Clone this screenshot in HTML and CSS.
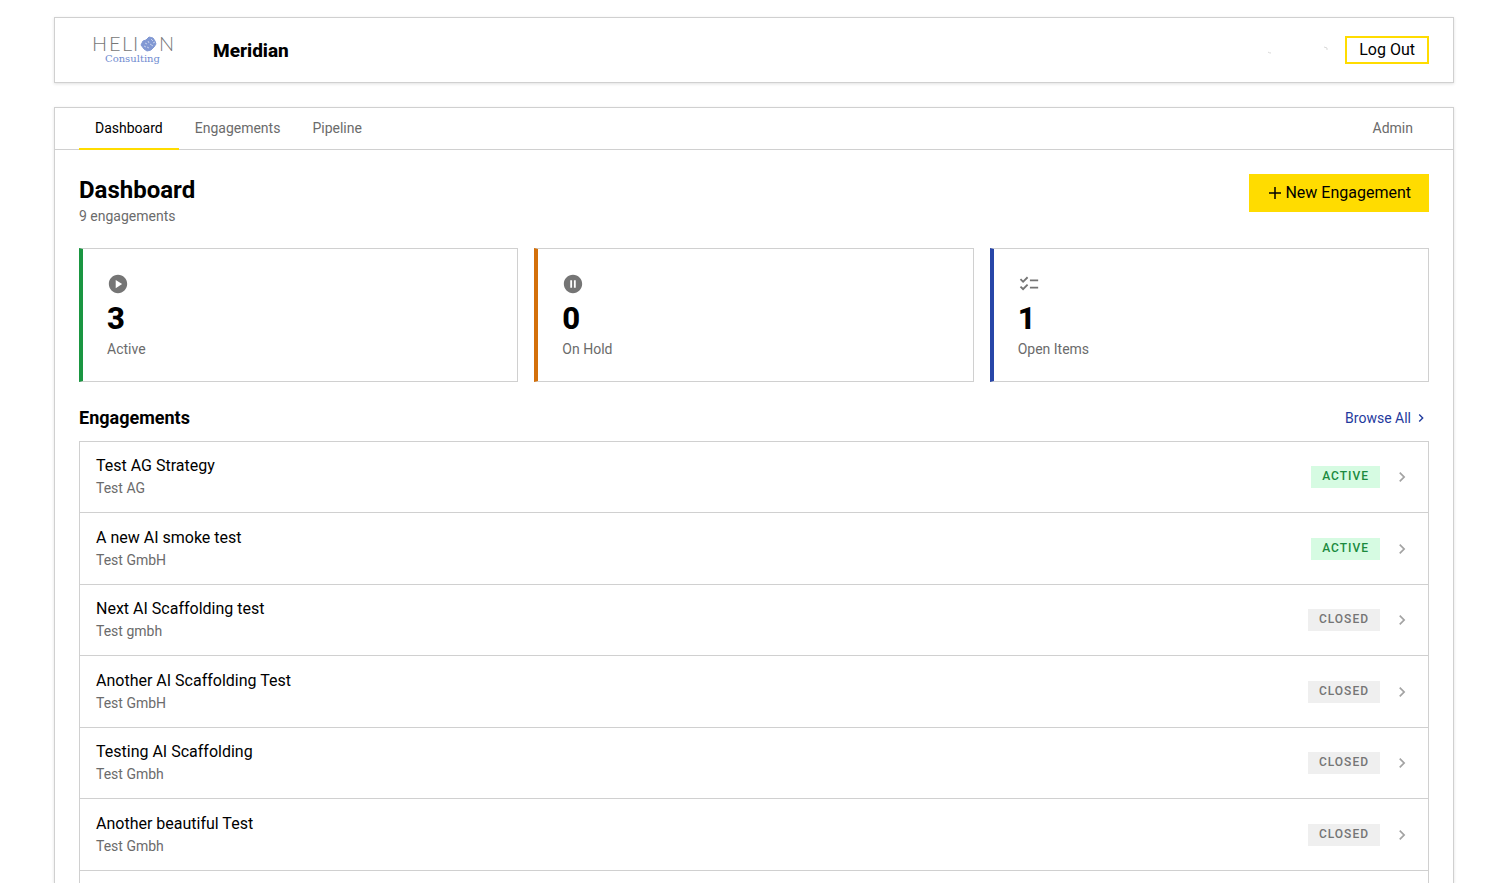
FILE: index.html
```html
<!DOCTYPE html>
<html lang="en">
<head>
<meta charset="utf-8">
<meta name="viewport" content="width=device-width, initial-scale=1">
<title>Meridian – Dashboard</title>
<link rel="stylesheet" href="styles.css">
</head>
<body>
<svg class="sprite" aria-hidden="true">
  <symbol id="chevron" viewBox="0 0 24 24"><path d="M10 6 8.59 7.41 13.17 12l-4.58 4.59L10 18l6-6z"/></symbol>
</svg>
<div class="page">
  <header class="topbar">
    <svg class="logo" viewBox="0 0 88 36" role="img" aria-label="Helion Consulting">
      <text class="logo-name" y="19" x="0 17 30 41 67">HELIN</text>
      <path d="M57 5l4 1 2 3 1 3-2 3-3 3-4 1-3-2-3-4 2-4 3-1z" fill="#8198d3" stroke="#8198d3" stroke-linejoin="round"/>
      <path d="M53 11l2 1M56 9l1 2M59 7l2 2M58 12l3 2M61 11l2-1M55 15l2 1M52 14l2 1" stroke="#c5d0ec" stroke-width="1" fill="none"/>
      <text class="logo-sub" x="13" y="30">Consulting</text>
    </svg>
    <span class="product">Meridian</span>
    <svg class="user-mark" viewBox="0 0 60 10" aria-hidden="true"><path d="M0 7q1 1 3 1M56 2l3 1v2" fill="none" stroke="#d9d9d9"/></svg>
    <button class="logout" type="button">Log Out</button>
  </header>

  <div class="panel">
    <nav class="tabs">
      <a class="tab tab-active" href="#dashboard" aria-current="page">Dashboard</a>
      <a class="tab" href="#engagements">Engagements</a>
      <a class="tab" href="#pipeline">Pipeline</a>
      <a class="tab tab-end" href="#admin">Admin</a>
    </nav>

    <main class="content">
      <div class="heading">
        <div>
          <h1 class="title">Dashboard</h1>
          <p class="subtitle">9 engagements</p>
        </div>
        <button class="new" type="button">
          <svg class="plus" viewBox="0 0 12 12" aria-hidden="true"><path d="M6 0v12M0 6h12" stroke="currentColor" stroke-width="1.5"/></svg>
          New Engagement
        </button>
      </div>

      <section class="stats">
        <article class="stat stat-active">
          <svg class="stat-icon" viewBox="0 0 24 24" aria-hidden="true"><path d="M12 2C6.48 2 2 6.48 2 12s4.480 10 10 10 10-4.480 10-10S17.520 2 12 2zM9.500 16.500v-9l7 4.500z"/></svg>
          <strong class="stat-value">3</strong>
          <span class="stat-label">Active</span>
        </article>
        <article class="stat stat-hold">
          <svg class="stat-icon" viewBox="0 0 24 24" aria-hidden="true"><path d="M12 2C6.480 2 2 6.480 2 12s4.480 10 10 10 10-4.480 10-10S17.520 2 12 2zM11 16H9V8h2zM15 16h-2V8h2z"/></svg>
          <strong class="stat-value">0</strong>
          <span class="stat-label">On Hold</span>
        </article>
        <article class="stat stat-open">
          <svg class="stat-icon" viewBox="0 0 24 24" aria-hidden="true"><path d="M22 7h-9v2h9zM22 15h-9v2h9zM5.540 11 2 7.460l1.410-1.410 2.120 2.120 4.240-4.240 1.410 1.410zM5.540 19 2 15.460l1.410-1.410 2.120 2.120 4.240-4.240 1.410 1.410z"/></svg>
          <strong class="stat-value">1</strong>
          <span class="stat-label">Open Items</span>
        </article>
      </section>

      <div class="section-head">
        <h2 class="section-title">Engagements</h2>
        <a class="browse" href="#all">Browse All <svg class="browse-icon" aria-hidden="true"><use href="#chevron"/></svg></a>
      </div>

      <div class="list">
        <a class="row" href="#e1"><span class="info"><span class="name">Test AG Strategy</span><span class="client">Test AG</span></span><span class="badge badge-active">ACTIVE</span><svg class="row-icon" aria-hidden="true"><use href="#chevron"/></svg></a>
        <a class="row" href="#e2"><span class="info"><span class="name">A new AI smoke test</span><span class="client">Test GmbH</span></span><span class="badge badge-active">ACTIVE</span><svg class="row-icon" aria-hidden="true"><use href="#chevron"/></svg></a>
        <a class="row" href="#e3"><span class="info"><span class="name">Next AI Scaffolding test</span><span class="client">Test gmbh</span></span><span class="badge">CLOSED</span><svg class="row-icon" aria-hidden="true"><use href="#chevron"/></svg></a>
        <a class="row" href="#e4"><span class="info"><span class="name">Another AI Scaffolding Test</span><span class="client">Test GmbH</span></span><span class="badge">CLOSED</span><svg class="row-icon" aria-hidden="true"><use href="#chevron"/></svg></a>
        <a class="row" href="#e5"><span class="info"><span class="name">Testing AI Scaffolding</span><span class="client">Test Gmbh</span></span><span class="badge">CLOSED</span><svg class="row-icon" aria-hidden="true"><use href="#chevron"/></svg></a>
        <a class="row" href="#e6"><span class="info"><span class="name">Another beautiful Test</span><span class="client">Test Gmbh</span></span><span class="badge">CLOSED</span><svg class="row-icon" aria-hidden="true"><use href="#chevron"/></svg></a>
      </div>
    </main>
  </div>
</div>
</body>
</html>
```
FILE: styles.css
```css
* { box-sizing: border-box; }

body {
  margin: 0;
  background: #fff;
  color: #000;
  font-family: Roboto, "Liberation Sans", sans-serif;
  font-size: 14px;
  line-height: 20px;
}

a { color: inherit; text-decoration: none; }
button { font: inherit; color: inherit; cursor: pointer; }
h1, h2, p { margin: 0; }
.sprite { display: none; }

.page {
  display: flex;
  flex-direction: column;
  gap: 24px;
  max-width: 1506px;
  min-height: 100vh;
  margin: 0 auto;
  padding: 17px 52px 0 54px;
}

.topbar,
.panel {
  background: #fff;
  border: 1px solid #d0d0d0;
  box-shadow: 0 1px 3px rgba(0, 0, 0, 0.12);
}

.topbar {
  display: flex;
  align-items: center;
  padding: 14px 24px;
}

.logo { width: 88px; height: 36px; margin: 0 33px 0 13px; overflow: visible; }
.logo-name { font: 300 20px Lato, sans-serif; fill: #777; }
.logo-sub { font: 10px "DejaVu Serif", serif; fill: #6f8bd0; }
.product { padding-top: 2px; font-size: 19px; font-weight: 800; line-height: 24px; }
.user-mark { width: 60px; height: 10px; margin: 0 17px 0 auto; }

.logout {
  padding: 0 12px;
  border: 2px solid #ffdc00;
  background: #fff;
  font-size: 16px;
  line-height: 24px;
}

.panel {
  display: flex;
  flex: 1;
  flex-direction: column;
  border-bottom: 0;
}

.tabs {
  display: flex;
  padding: 0 24px;
  border-bottom: 1px solid #d0d0d0;
  color: #6b6b6b;
}

.tab {
  margin-bottom: -1px;
  padding: 10px 16px;
  border-bottom: 2px solid transparent;
}
.tab-active { border-color: #ffdc00; color: #000; }
.tab-end { margin-left: auto; }

.content {
  display: flex;
  flex: 1;
  flex-direction: column;
  padding: 24px 24px 0;
}

.heading {
  display: flex;
  align-items: flex-start;
  justify-content: space-between;
  margin-bottom: 22px;
}
.title { font-size: 24px; font-weight: 700; line-height: 32px; }
.subtitle { color: #6b6b6b; }

.new {
  display: flex;
  align-items: center;
  gap: 4px;
  padding: 7px 18px 7px 20px;
  border: 0;
  background: #ffdc00;
  font-size: 16px;
  line-height: 24px;
}
.plus { width: 12px; height: 12px; }

.stats {
  display: grid;
  grid-template-columns: repeat(3, 1fr);
  gap: 16px;
  margin-bottom: 24px;
}
.stat {
  display: flex;
  flex-direction: column;
  padding: 24px 24px 22px;
  border: 1px solid #d0d0d0;
  border-left-width: 4px;
}
.stat-active { border-left-color: #1a9641; }
.stat-hold { border-left-color: #d4700a; }
.stat-open { border-left-color: #2846a8; }
.stat-icon { width: 22px; height: 22px; fill: #757575; }
.stat-value { padding-top: 4px; font-size: 31px; font-weight: 800; line-height: 40px; }
.stat-label { color: #6b6b6b; }

.section-head {
  display: flex;
  align-items: center;
  justify-content: space-between;
  margin-bottom: 11px;
}
.section-title { font-size: 18px; font-weight: 700; line-height: 24px; }
.browse {
  display: flex;
  align-items: center;
  gap: 2px;
  color: #1f3a9e;
}
.browse-icon { width: 16px; height: 16px; fill: currentColor; }

.list {
  flex: 1;
  border: 1px solid #d0d0d0;
  border-bottom: 0;
}
.row {
  display: flex;
  align-items: center;
  min-height: 71px;
  padding: 0 16px;
  border-bottom: 1px solid #d0d0d0;
}
.row:nth-child(even) { min-height: 72px; }
.info { display: flex; flex: 1; flex-direction: column; padding-bottom: 2px; }
.name { font-size: 16px; line-height: 24px; }
.client { color: #6b6b6b; }

.badge {
  margin-right: 12px;
  padding: 0 11px 1px;
  background: #efefef;
  color: #757575;
  font-size: 12px;
  font-weight: 500;
  letter-spacing: 1px;
  line-height: 21px;
}
.badge-active { background: #d6fbe2; color: #1b8a3e; }
.row-icon { width: 20px; height: 20px; fill: #a3a3a3; }
```
